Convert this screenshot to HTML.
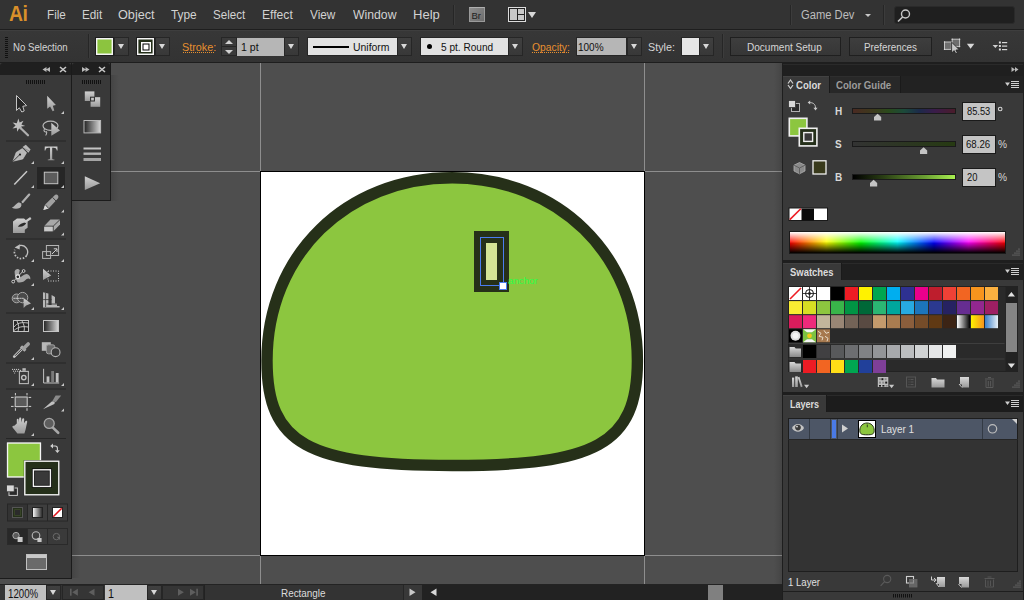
<!DOCTYPE html>
<html><head><meta charset="utf-8">
<style>
*{margin:0;padding:0;box-sizing:border-box}
html,body{width:1024px;height:600px;overflow:hidden;background:#323232}
body{position:relative;font-family:"Liberation Sans",sans-serif;color:#d6d6d6}
.a{position:absolute}
.t{position:absolute;white-space:nowrap;line-height:1}
.dd{position:absolute;background:linear-gradient(#404040,#383838);border:1px solid #262626}
.dd:after{content:"";position:absolute;left:50%;top:50%;margin-left:-3.75px;margin-top:-3px;border-left:3.75px solid transparent;border-right:3.75px solid transparent;border-top:5.4px solid #d8d8d8}
.sep{position:absolute;width:1px;background:#262626;box-shadow:1px 0 0 #3c3c3c}
</style></head><body>

<!-- MENU BAR -->
<div class="a" id="menubar" style="left:0;top:0;width:1024px;height:29px;background:#333"></div>
<div class="a" style="left:0;top:29px;width:1024px;height:1px;background:#1e1e1e"></div>
<div class="t" style="left:8.5px;top:2.5px;font-size:22px;font-weight:bold;color:#d9902a;letter-spacing:-0.5px;transform:scaleX(0.88);transform-origin:0 0">Ai</div>
<div class="t" style="left:46.66px;top:9px;font-size:12.5px;color:#d2d2d2;transform:scaleX(0.937);transform-origin:0 0">File</div>
<div class="t" style="left:81.56px;top:9px;font-size:12.5px;color:#d2d2d2;transform:scaleX(0.938);transform-origin:0 0">Edit</div>
<div class="t" style="left:117.89px;top:9px;font-size:12.5px;color:#d2d2d2;transform:scaleX(1.014);transform-origin:0 0">Object</div>
<div class="t" style="left:170.80px;top:9px;font-size:12.5px;color:#d2d2d2;transform:scaleX(0.948);transform-origin:0 0">Type</div>
<div class="t" style="left:212.97px;top:9px;font-size:12.5px;color:#d2d2d2;transform:scaleX(0.926);transform-origin:0 0">Select</div>
<div class="t" style="left:262.33px;top:9px;font-size:12.5px;color:#d2d2d2;transform:scaleX(0.971);transform-origin:0 0">Effect</div>
<div class="t" style="left:309.60px;top:9px;font-size:12.5px;color:#d2d2d2;transform:scaleX(0.941);transform-origin:0 0">View</div>
<div class="t" style="left:352.90px;top:9px;font-size:12.5px;color:#d2d2d2;transform:scaleX(0.978);transform-origin:0 0">Window</div>
<div class="t" style="left:412.96px;top:9px;font-size:12.5px;color:#d2d2d2;transform:scaleX(1.042);transform-origin:0 0">Help</div>
<div class="sep" style="left:453px;top:5px;height:20px"></div>


<div class="a" style="left:469px;top:7px;width:16px;height:15px;background:linear-gradient(135deg,#8e8e8e,#6c6c6c);border:1px solid #9a9a9a;border-top-color:#b0b0b0"></div>
<div class="t" style="left:471.5px;top:10.5px;font-size:9.5px;color:#1e1e1e">Br</div>
<div class="a" style="left:508px;top:7px;width:18px;height:15px;background:#c8c8c8;border:1px solid #dcdcdc;box-shadow:inset 0 0 0 1px #222"></div>
<div class="a" style="left:517px;top:9px;width:1px;height:11px;background:#222"></div>
<div class="a" style="left:518px;top:14px;width:6px;height:1px;background:#222"></div>
<div class="a" style="left:528px;top:12px;width:0;height:0;border-left:4px solid transparent;border-right:4px solid transparent;border-top:6px solid #d8d8d8"></div>
<div class="sep" style="left:790px;top:5px;height:20px"></div>
<div class="t" style="left:801.31px;top:8.5px;font-size:12.5px;color:#bdbdbd;transform:scaleX(0.895);transform-origin:0 0">Game Dev</div>
<div class="a" style="left:865px;top:14px;width:0;height:0;border-left:3px solid transparent;border-right:3px solid transparent;border-top:3px solid #c8c8c8"></div>
<div class="sep" style="left:883px;top:5px;height:20px"></div>
<div class="a" style="left:894px;top:6px;width:121px;height:18px;background:#1f1f1f;border-radius:3px;border:1px solid #2a2a2a"></div>
<svg class="a" style="left:896px;top:8px" width="16" height="16" viewBox="0 0 16 16"><circle cx="9.5" cy="6" r="4" fill="none" stroke="#c8c8c8" stroke-width="1.4"/><path d="M6.6 9 L2 13.5" stroke="#c8c8c8" stroke-width="1.6"/></svg>

<!-- CONTROL BAR -->
<div class="a" id="ctrl" style="left:0;top:30px;width:1024px;height:32px;background:linear-gradient(#3e3e3e 0,#3e3e3e 1px,#373737 1px,#333333)"></div>
<div class="a" style="left:0;top:62px;width:1024px;height:1px;background:#1e1e1e"></div>


<div class="a" style="left:5px;top:37px;width:3px;height:21px;background:repeating-linear-gradient(#111 0 1px,transparent 1px 2px)"></div>
<div class="t" style="left:12.88px;top:41.5px;font-size:10.5px;color:#d6d6d6;transform:scaleX(0.917);transform-origin:0 0">No Selection</div>
<div class="sep" style="left:88px;top:34px;height:24px"></div>
<div class="a" style="left:95px;top:37px;width:19px;height:19px;background:#8cc43f;border:1px solid #1e1e1e;box-shadow:inset 0 0 0 1.4px #f4f4f4"></div>
<div class="dd" style="left:114px;top:37px;width:15px;height:19px"></div>
<div class="a" style="left:136px;top:37px;width:19px;height:19px;background:#25301a;border:1px solid #1e1e1e;box-shadow:inset 0 0 0 1.4px #f4f4f4"></div>
<div class="a" style="left:140.5px;top:41.5px;width:10px;height:10px;background:#fff;box-shadow:inset 0 0 0 1.5px #fff,inset 0 0 0 2.5px #000"></div>
<div class="dd" style="left:155px;top:37px;width:15px;height:19px"></div>
<div class="t" style="left:181.77px;top:41.5px;font-size:10.5px;color:#e8902f;transform:scaleX(1.029);transform-origin:0 0">Stroke:</div>
<div class="a" style="left:183px;top:52px;width:32px;height:1px;background:repeating-linear-gradient(90deg,#e8902f 0 1px,transparent 1px 2px)"></div>
<div class="a" style="left:221px;top:37px;width:16px;height:10px;background:#3a3a3a;border:1px solid #262626"></div>
<div class="a" style="left:221px;top:46px;width:16px;height:10px;background:#3a3a3a;border:1px solid #262626"></div>
<div class="a" style="left:225px;top:40px;width:0;height:0;border-left:4px solid transparent;border-right:4px solid transparent;border-bottom:4px solid #d0d0d0"></div>
<div class="a" style="left:225px;top:50px;width:0;height:0;border-left:4px solid transparent;border-right:4px solid transparent;border-top:4px solid #d0d0d0"></div>
<div class="a" style="left:237px;top:38px;width:47px;height:18px;background:#b6b6b6"></div>
<div class="t" style="left:240.89px;top:41.5px;font-size:10.5px;color:#111;transform:scaleX(1.006);transform-origin:0 0">1 pt</div>
<div class="dd" style="left:284px;top:37px;width:15px;height:19px"></div>
<div class="a" style="left:307px;top:37px;width:91px;height:19px;background:#e2e2e2;border:1px solid #262626"></div>
<div class="a" style="left:313px;top:46px;width:36px;height:2px;background:#000"></div>
<div class="t" style="left:353.26px;top:41.5px;font-size:10.5px;color:#111;transform:scaleX(0.993);transform-origin:0 0">Uniform</div>
<div class="dd" style="left:397px;top:37px;width:15px;height:19px"></div>
<div class="a" style="left:420px;top:37px;width:89px;height:19px;background:#e2e2e2;border:1px solid #262626"></div>
<div class="a" style="left:427px;top:44px;width:5px;height:5px;border-radius:50%;background:#000"></div>
<div class="t" style="left:441.04px;top:41.5px;font-size:10.5px;color:#111;transform:scaleX(0.962);transform-origin:0 0">5 pt. Round</div>
<div class="dd" style="left:508px;top:37px;width:15px;height:19px"></div>
<div class="t" style="left:531.90px;top:41.5px;font-size:10.5px;color:#e8902f;transform:scaleX(0.982);transform-origin:0 0">Opacity:</div>
<div class="a" style="left:532px;top:52px;width:37px;height:1px;background:repeating-linear-gradient(90deg,#e8902f 0 1px,transparent 1px 2px)"></div>
<div class="a" style="left:576px;top:37px;width:51px;height:19px;background:#b6b6b6;border:1px solid #262626"></div>
<div class="t" style="left:578.05px;top:41.5px;font-size:10.5px;color:#111;transform:scaleX(0.952);transform-origin:0 0">100%</div>
<div class="dd" style="left:627px;top:37px;width:15px;height:19px"></div>
<div class="t" style="left:647.77px;top:41.5px;font-size:10.5px;color:#d6d6d6;transform:scaleX(1.025);transform-origin:0 0">Style:</div>
<div class="a" style="left:681px;top:37px;width:19px;height:19px;background:#e6e6e6;border:1px solid #262626"></div>
<div class="dd" style="left:699px;top:37px;width:15px;height:19px"></div>
<div class="sep" style="left:722px;top:34px;height:24px"></div>
<div class="a" style="left:730px;top:37px;width:111px;height:19px;background:linear-gradient(#3e3e3e,#363636);border:1px solid #1f1f1f"></div>
<div class="t" style="left:747.04px;top:41.5px;font-size:10.5px;color:#d6d6d6;transform:scaleX(0.956);transform-origin:0 0">Document Setup</div>
<div class="a" style="left:849px;top:37px;width:83px;height:19px;background:linear-gradient(#3e3e3e,#363636);border:1px solid #1f1f1f"></div>
<div class="t" style="left:863.86px;top:41.5px;font-size:10.5px;color:#d6d6d6;transform:scaleX(0.936);transform-origin:0 0">Preferences</div>


<svg class="a" style="left:936px;top:34px" width="80" height="26" viewBox="936 34 80 26">
<rect x="944.5" y="42" width="6.8" height="7.4" fill="#6e6e6e" stroke="#c4c4c4" stroke-width="1"/>
<rect x="952.2" y="39.2" width="7.4" height="7.4" fill="#6e6e6e" stroke="#c4c4c4" stroke-width="1"/>
<g fill="#d8d8d8"><circle cx="944.5" cy="42" r="0.7"/><circle cx="944.5" cy="49.4" r="0.7"/><circle cx="952.2" cy="39.2" r="0.7"/><circle cx="959.6" cy="39.2" r="0.7"/><circle cx="959.6" cy="46.6" r="0.7"/></g>
<path d="M951.6,42.2 L951.6,53 L954.2,50.6 L955.8,53.8 L957.4,53.1 L955.9,50 L959.3,49.8 Z" fill="#c8c8c8" stroke="#1e1e1e" stroke-width="0.8"/>
<path d="M966.9,43.8 L974.3,43.8 L970.6,48.8 Z" fill="#d8d8d8"/>
<path d="M992.6,45 L998.1,45 L995.35,48 Z" fill="#d0d0d0"/>
<g fill="#d8d8d8"><rect x="998.9" y="41.5" width="2" height="2"/><rect x="998.9" y="45" width="2" height="2"/><rect x="998.9" y="48.5" width="2" height="2"/><rect x="1002" y="42" width="5.2" height="1.2"/><rect x="1002" y="45.5" width="5.2" height="1.2"/><rect x="1002" y="49" width="5.2" height="1.2"/></g>
</svg>


<!-- CANVAS -->
<div class="a" id="canvas" style="left:0;top:63px;width:782px;height:521px;background:#4e4e4e"></div>


<div class="a" style="left:260px;top:171px;width:385px;height:385px;background:#fff;border:1px solid #000"></div>
<div class="a" style="left:260px;top:63px;width:1px;height:108px;background:#8e8e8e"></div>
<div class="a" style="left:644px;top:63px;width:1px;height:108px;background:#8e8e8e"></div>
<div class="a" style="left:260px;top:556px;width:1px;height:28px;background:#8e8e8e"></div>
<div class="a" style="left:644px;top:556px;width:1px;height:28px;background:#8e8e8e"></div>
<div class="a" style="left:72px;top:171px;width:188px;height:1px;background:#8e8e8e"></div>
<div class="a" style="left:645px;top:171px;width:137px;height:1px;background:#8e8e8e"></div>
<div class="a" style="left:72px;top:555px;width:188px;height:1px;background:#8e8e8e"></div>
<div class="a" style="left:645px;top:555px;width:137px;height:1px;background:#8e8e8e"></div>
<svg class="a" style="left:0;top:0" width="1024" height="600" viewBox="0 0 1024 600">
<path d="M452.2,177.8 C347.3,177.8 267,254.1 267,360.7 C267,444.4 308.5,465.5 452.2,465.5 C595.9,465.5 637.4,444.4 637.4,360.7 C637.4,254.1 557.1,177.8 452.2,177.8 Z" fill="#8cc63f" stroke="#263019" stroke-width="11.4"/>
<rect x="474" y="231" width="35" height="61" fill="#263019"/>
<rect x="486" y="243" width="11" height="37" fill="#d5e496"/>
<rect x="480.5" y="237.5" width="23" height="48" fill="none" stroke="#4a7cf0" stroke-width="1"/>
<rect x="499.5" y="282.5" width="7" height="7" fill="#fff" stroke="#4a7cf0" stroke-width="1"/>
</svg>
<div class="t" style="left:507.90px;top:276px;font-size:9.5px;color:#2cff46;transform:scaleX(1.021);transform-origin:0 0">anchor</div>

<div class="a" style="left:72px;top:201px;width:8px;height:377px;background:linear-gradient(90deg,rgba(0,0,0,.12),rgba(0,0,0,0))"></div>
<div class="a" style="left:111px;top:75px;width:8px;height:126px;background:linear-gradient(90deg,rgba(0,0,0,.12),rgba(0,0,0,0))"></div>
<div class="a" style="left:774px;top:63px;width:8px;height:521px;background:linear-gradient(90deg,rgba(0,0,0,0),rgba(0,0,0,.12))"></div>
<!-- TOOLBAR -->
<div class="a" id="toolbar" style="left:0;top:63px;width:72px;height:516px;background:#393939;border-right:1px solid #1b1b1b;border-bottom:1px solid #1b1b1b"></div>
<div class="a" style="left:0;top:63px;width:71px;height:12px;background:#1f1f1f;border-radius:3px 3px 0 0"></div>

<!-- MINI PANEL -->
<div class="a" id="mini" style="left:72px;top:63px;width:39px;height:138px;background:#393939;border-right:1px solid #1b1b1b;border-bottom:1px solid #1b1b1b"></div>
<div class="a" style="left:72px;top:63px;width:38px;height:12px;background:#1f1f1f;border-radius:3px 3px 0 0"></div>

<svg class="a" style="left:0;top:0" width="112" height="600" viewBox="0 0 112 600">
<defs>
<linearGradient id="ig" x1="0" y1="0" x2="0" y2="1"><stop offset="0" stop-color="#d0d0d0"/><stop offset="1" stop-color="#9a9a9a"/></linearGradient>
<linearGradient id="gg" x1="0" y1="0" x2="1" y2="0"><stop offset="0" stop-color="#222"/><stop offset="1" stop-color="#d8d8d8"/></linearGradient>
</defs>
<!-- header icons -->
<path d="M42.5,69.5 L46.5,67 L46.5,72 Z M46,69.5 L50,67 L50,72 Z" fill="#b8b8b8"/>
<path d="M60,67 L66,72 M66,67 L60,72" stroke="#c8c8c8" stroke-width="1.6"/>

<path d="M26.5,80v4M28.5,80v4M30.5,80v4M32.5,80v4M34.5,80v4M36.5,80v4M38.5,80v4M40.5,80v4M42.5,80v4M44.5,80v4" stroke="#111" stroke-width="1"/>
<!-- mini panel header -->
<path d="M82,67 L86,69.5 L82,72 Z M85.5,67 L89.5,69.5 L85.5,72 Z" fill="#b8b8b8"/>
<path d="M99,67 L105,72 M105,67 L99,72" stroke="#c8c8c8" stroke-width="1.6"/>
<path d="M82.5,80v4M84.5,80v4M86.5,80v4M88.5,80v4M90.5,80v4M92.5,80v4M94.5,80v4M96.5,80v4M98.5,80v4M100.5,80v4" stroke="#111" stroke-width="1"/>
<!-- separators -->
<g fill="#262626"><rect x="6" y="140.5" width="60" height="1"/><rect x="6" y="238.5" width="60" height="1"/><rect x="6" y="312.5" width="60" height="1"/><rect x="6" y="362.5" width="60" height="1"/><rect x="6" y="388.5" width="60" height="1"/><rect x="6" y="438" width="60" height="1"/></g>
<!-- corner triangles -->
<g fill="#c8c8c8">
<path d="M61,114 H64 V111 Z"/>
<path d="M31,164 H34 V161 Z M61,164 H64 V161 Z"/>
<path d="M31,188 H34 V185 Z M61,188 H64 V185 Z"/>
<path d="M61,212.5 H64 V209.5 Z M61,235.5 H64 V232.5 Z"/>
<path d="M31,262 H34 V259 Z M61,262 H64 V259 Z"/>
<path d="M31,286 H34 V283 Z"/>
<path d="M31,310 H34 V307 Z M61,310 H64 V307 Z"/>
<path d="M31,360 H34 V357 Z"/>
<path d="M31,386 H34 V383 Z M61,386 H64 V383 Z"/>
<path d="M61,411.5 H64 V408.5 Z M31,436 H34 V433 Z"/>
</g>
<!-- row1 selection -->
<path d="M16.5,95.5 L16.5,110.5 L19.3,107.8 L21.8,112 L24.2,111 L22.8,106.3 L26.6,105.6 Z" fill="#262626" stroke="#c4c4c4" stroke-width="1"/>
<path d="M47.2,95.8 L47.2,108.8 L50.1,106.5 L52.6,111.2 L54.3,110.6 L52.8,105.8 L55.9,105 Z" fill="url(#ig)"/>
<!-- row2 magic wand -->
<path d="M18.4,118.5 L19.6,122.4 L23.5,120.8 L21.4,124.4 L25.2,126 L21.2,126.6 L22.4,130.6 L19.2,128.2 L17.2,131.8 L16.8,127.8 L12.5,128.6 L15.6,125.6 L12.6,122.6 L16.8,123.2 Z" fill="#c0c0c0"/>
<path d="M20.5,128 L28,135.3" stroke="#b0b0b0" stroke-width="2.2" stroke-linecap="round"/>
<!-- lasso -->
<ellipse cx="50.5" cy="125.8" rx="7.5" ry="4.6" fill="none" stroke="#b8b8b8" stroke-width="1.2"/>
<path d="M44.5,129 C43,131 45,132.5 46.5,131.8 C47.5,133.5 45.5,134.5 46,135.5" fill="none" stroke="#b8b8b8" stroke-width="1.1"/>
<path d="M51.3,122.8 L51.3,135.8 L60,130.6 Z" fill="url(#ig)"/>
<!-- row3 pen -->
<path d="M13,161.2 L16.2,152.4 L22.4,148.6 L26.6,152.8 L22.8,159 Z" fill="#b8b8b8" stroke="#d0d0d0" stroke-width="0.6"/>
<path d="M13,161.2 L19.6,154.8" stroke="#333" stroke-width="0.9"/>
<circle cx="20" cy="154.6" r="1.1" fill="#222"/>
<path d="M22.6,147 L25.8,144.8 L30.6,149.6 L28.4,152.8 Z" fill="#b8b8b8"/>
<path d="M23.8,148.4 L29.2,150.8" stroke="#777" stroke-width="0.6"/>
<!-- T -->
<path d="M44.8,146.6 H57.4 L57.6,150.6 H56.8 C56.4,148.4 55.6,147.8 53.6,147.8 H52.2 V158.2 C52.2,159.2 52.8,159.6 54.4,159.6 V160.3 H47.8 V159.6 C49.4,159.6 50,159.2 50,158.2 V147.8 H48.6 C46.6,147.8 45.8,148.4 45.4,150.6 H44.6 Z" fill="url(#ig)"/>
<!-- row4 line -->
<path d="M14.3,184.6 L27,171.3" stroke="#c8c8c8" stroke-width="1.5"/>
<!-- rect selected -->
<rect x="37" y="167" width="28" height="22" fill="#262626"/>
<rect x="44.3" y="172.2" width="13.5" height="11.5" fill="#5c5c5c" stroke="#c4c4c4" stroke-width="1"/>
<path d="M61,188 H64 V185 Z" fill="#c8c8c8"/>
<!-- row5 brush -->
<path d="M29.2,194.6 L22.2,202.4" stroke="#b0b0b0" stroke-width="2.2" stroke-linecap="round"/>
<path d="M20.4,201.6 L22.8,203.8" stroke="#2a2a2a" stroke-width="0.8"/>
<path d="M11.8,207.8 C13.6,207.2 15.4,204.6 17.6,203 C19.4,201.8 21.8,203.2 21.4,205.4 C20.8,208.4 16.2,209.8 11.8,207.8 Z" fill="#b4b4b4"/>
<!-- pencil -->
<path d="M43.4,210 L45.2,204.6 L54.4,195.4 C55.6,194.2 57.4,194.4 58,195.6 C58.8,196.8 58.4,198.2 57.4,199 L48.6,208.4 Z" fill="#a0a0a0"/>
<path d="M43.4,210 L45.2,204.6 L48.6,208.4 Z" fill="#d8d8d8"/>
<path d="M45.2,204.6 L48.6,208.4 M52.6,197.4 L56,201" stroke="#2a2a2a" stroke-width="0.8"/>
<!-- row6 blob brush -->
<path d="M13,221.5 L17,218.6 L24,218.6 L27.6,221.6 L27.6,227.8 L24.8,229.8 L24.8,233 L13,233 Z" fill="url(#ig)"/>
<path d="M17.8,226.6 C20,223.8 23.8,222.4 26.4,222.6 C25.4,225.4 22,227.6 17.8,226.6 Z" fill="#2a2a2a"/>
<path d="M24.8,222.2 L30.8,218" stroke="#c8c8c8" stroke-width="2.2"/>
<!-- eraser -->
<path d="M44,226.2 L50.4,219.6 L60,219.6 L60,224.6 L53.2,231.6 L44,231.6 Z" fill="#a8a8a8"/>
<path d="M44,226.2 L53.2,226.2 L60,219.6 M53.2,226.2 L53.2,231.6" stroke="#262626" stroke-width="0.8" fill="none"/>
<path d="M44.6,226.8 L52.6,226.8 L52.6,231 L44.6,231 Z" fill="#c8c8c8"/>
<!-- row7 rotate -->
<path d="M19.85,245.50 A6.6,6.6 0 0 1 26.41,255.79" fill="none" stroke="#c0c0c0" stroke-width="1.3"/>
<path d="M26.41,255.79 A6.6,6.6 0 0 1 14.80,249.74" fill="none" stroke="#c0c0c0" stroke-width="1.7" stroke-dasharray="1.5 1.5"/>
<path d="M14.6,247.6 L20,244.2 L19.6,249.6 Z" fill="#c0c0c0"/>
<!-- scale -->
<rect x="46.4" y="245.5" width="12.2" height="10" fill="#3e3e3e" stroke="#b4b4b4" stroke-width="1"/>
<rect x="42.6" y="251.6" width="8" height="6.8" fill="none" stroke="#b4b4b4" stroke-width="1"/>
<path d="M52,254 L56.8,249.2 M53.8,248.8 L57,248.8 L57,252" stroke="#d0d0d0" stroke-width="1" fill="none"/>
<!-- row8 width/warp -->
<path d="M14.6,271.4 C16,268.4 18.8,268.6 19.8,270.6 C19.2,272.6 18.4,275 19.6,277.4 C22,277 25.6,272.4 28.4,274.8 C30.4,276.6 30.6,278.4 30.2,279.4 C28.6,277.8 26.8,278.4 25,280.6 C22.8,282.6 19.4,283 17.6,282.2 C15.6,279.6 14.6,275 14.6,271.4 Z" fill="#a8a8a8"/>
<path d="M13,281.8 L23.6,270.6" stroke="#d8d8d8" stroke-width="0.9"/>
<circle cx="17.8" cy="276.8" r="1.9" fill="#2a2a2a" stroke="#e8e8e8" stroke-width="1.1"/>
<circle cx="13.2" cy="281.6" r="1.4" fill="#2a2a2a" stroke="#e0e0e0" stroke-width="0.9"/>
<circle cx="23.6" cy="271" r="1.4" fill="#2a2a2a" stroke="#e0e0e0" stroke-width="0.9"/>
<!-- free transform -->
<path d="M43,268.8 L43,280 L51.2,275.6 Z" fill="url(#ig)"/>
<rect x="48" y="271" width="10.5" height="10" fill="none" stroke="#d0d0d0" stroke-width="1" stroke-dasharray="1 1.5"/>
<!-- row9 shape builder -->
<circle cx="16.6" cy="298.4" r="4.4" fill="#5a5a5a" stroke="#a8a8a8" stroke-width="1"/>
<circle cx="22.6" cy="297.6" r="5.2" fill="#4a4a4a" stroke="#a8a8a8" stroke-width="1"/>
<path d="M13.6,298.4 H24" stroke="#f0f0f0" stroke-width="1.2" stroke-dasharray="1 1"/>
<path d="M23.6,298 L23.6,308 L26.2,305.4 L31,303.6 Z" fill="url(#ig)"/>
<!-- perspective grid -->
<path d="M43,292.2 L43,307.6 L59.6,307.6 L59.6,306 L57,306 L57,303.4 L55,303.4 L55,297 L51.6,295 L51.6,305 L48.4,305 L48.4,293.6 Z" fill="#b8b8b8"/>
<path d="M43.2,299.6 H51.6 M45.6,292.8 V307 M46.6,304 H57" stroke="#333" stroke-width="0.8"/>
<!-- row10 mesh -->
<rect x="13.5" y="320.5" width="15" height="11" fill="#262626" stroke="#c4c4c4" stroke-width="1"/>
<path d="M14,327 C17,323 21,322 28,323 M14,330.5 C18,327 22,326 28,327 M17,321 C19,325 19,328 18,331.5 M22,321 C24,324 25,328 24,331.5" fill="none" stroke="#d0d0d0" stroke-width="0.9"/>
<!-- gradient -->
<rect x="43.5" y="320.5" width="15" height="11" fill="url(#gg)" stroke="#c4c4c4" stroke-width="1"/>
<!-- row11 eyedropper -->
<path d="M14.2,356.6 L22.6,348.2" stroke="#c8c8c8" stroke-width="2.6" stroke-linecap="round"/>
<path d="M15,355.8 L22,348.8" stroke="#333" stroke-width="1"/>
<path d="M21,346.4 L25.4,350.8" stroke="#b0b0b0" stroke-width="3"/>
<path d="M23.6,348.6 L28.2,344" stroke="#a0a0a0" stroke-width="3.6" stroke-linecap="round"/>
<!-- blend -->
<rect x="41.8" y="342.2" width="9" height="8.6" fill="#b8b8b8"/>
<rect x="46.4" y="344.8" width="8.4" height="9" rx="2" fill="#6a6a6a" stroke="#a0a0a0" stroke-width="1"/>
<circle cx="55.6" cy="352.2" r="4.4" fill="#3a3a3a" stroke="#b4b4b4" stroke-width="1.1"/>
<!-- row12 symbol sprayer -->
<g fill="#c8c8c8"><circle cx="12.6" cy="369.4" r="0.6"/><circle cx="14.6" cy="369.4" r="0.6"/><circle cx="16.6" cy="369.4" r="0.6"/><circle cx="18.6" cy="369.4" r="0.6"/><circle cx="13.6" cy="371.2" r="0.6"/><circle cx="15.6" cy="371.2" r="0.6"/><circle cx="17.6" cy="371.2" r="0.6"/><circle cx="20.4" cy="370.4" r="0.6"/><circle cx="14.6" cy="373" r="0.6"/></g>
<rect x="22.4" y="368.2" width="3.4" height="2.6" fill="#b8b8b8"/>
<rect x="19.4" y="371.4" width="9" height="12.2" fill="#3a3a3a" stroke="#b8b8b8" stroke-width="1.1"/>
<circle cx="23.8" cy="377.6" r="2.2" fill="none" stroke="#c0c0c0" stroke-width="1.4"/>
<!-- column graph -->
<path d="M43.6,368.8 V383 H59.2" fill="none" stroke="#c0c0c0" stroke-width="1"/>
<rect x="46.6" y="376.4" width="2.8" height="6" fill="#c0c0c0"/>
<rect x="51.2" y="371" width="2.8" height="11.4" fill="#7a7a7a"/>
<rect x="55.8" y="373" width="2.8" height="9.4" fill="#c0c0c0"/>
<!-- row13 artboard -->
<rect x="15.2" y="397" width="12" height="9.6" fill="#5a5a5a" stroke="#c8c8c8" stroke-width="1.1"/>
<path d="M15.4,393 V395.4 M27,393 V395.4 M15.4,408.2 V410.8 M27,408.2 V410.8 M11,397.4 H13.6 M28.6,397.4 H31.2 M11,406.4 H13.6 M28.6,406.4 H31.2" stroke="#d0d0d0" stroke-width="1"/>
<!-- slice -->
<path d="M43,409.2 L50.6,402.4 C52,401 54,401 54.8,402.2 L54.4,404 Z" fill="#c0c0c0"/>
<path d="M52.4,401 L55.6,395.6 L61.2,395.6 L55.8,402.2 Z" fill="#8a8a8a"/>
<!-- row14 hand -->
<path d="M16.8,423.6 L16.8,419.6 C16.8,418.4 18.6,418.4 18.6,419.6 L18.6,422.6 L19.2,418.4 C19.2,417.2 21.2,417.2 21.2,418.4 L21.4,422.4 L22.2,419 C22.4,417.8 24.2,418 24.2,419.2 L24,423.2 L25.2,421.4 C25.8,420.4 27.4,420.8 27.2,422 L25.6,429.6 L24.4,433.6 L17.4,433.6 L12.6,427.4 C12,426.4 13,425.4 14,426 Z" fill="url(#ig)"/>
<!-- zoom -->
<path d="M52.6,427.4 L58.2,432.8" stroke="#a8a8a8" stroke-width="2.6" stroke-linecap="round"/>
<circle cx="49.2" cy="423.4" r="5" fill="#5e5e5e" stroke="#a8a8a8" stroke-width="1.3"/>
<!-- fill / stroke -->
<rect x="6.5" y="442" width="35" height="36" fill="#1e1e1e"/>
<rect x="7.5" y="443" width="33" height="34" fill="#8cc63f" stroke="#f4f4f4" stroke-width="1.4"/>
<rect x="23.8" y="460.2" width="36" height="35.6" fill="#1e1e1e"/>
<rect x="24.8" y="461.2" width="34" height="33.6" fill="#25301a" stroke="#f4f4f4" stroke-width="1.4"/>
<rect x="33.4" y="469.8" width="17" height="16.6" fill="#393939" stroke="#0e0e0e" stroke-width="3"/>
<rect x="33.4" y="469.8" width="17" height="16.6" fill="none" stroke="#f4f4f4" stroke-width="1.4"/>
<path d="M52,446 H55.2 C56.6,446 57.4,446.8 57.4,448.2 V450.6" fill="none" stroke="#d0d0d0" stroke-width="1.1"/>
<path d="M50.2,446 L53,443.6 L53,448.4 Z M57.4,453 L55,450.2 L59.8,450.2 Z" fill="#d0d0d0"/>
<rect x="9" y="488" width="8.4" height="7.4" fill="#2a2a2a" stroke="#c8c8c8" stroke-width="1"/>
<rect x="6.6" y="485" width="7.6" height="6.8" fill="#d8d8d8" stroke="#333" stroke-width="0.8"/>
<!-- mode buttons -->
<rect x="7" y="503.5" width="61" height="18" fill="#262626"/>
<rect x="8" y="504.5" width="19" height="16" fill="#333"/>
<rect x="28" y="504.5" width="19" height="16" fill="#3e3e3e"/>
<rect x="48" y="504.5" width="19" height="16" fill="#3e3e3e"/>
<rect x="12.5" y="507.5" width="10" height="10" fill="#25301a" stroke="#555" stroke-width="1"/>
<rect x="14.6" y="509.6" width="5.8" height="5.8" fill="#2b2b2b" stroke="#3c4a2a" stroke-width="0.8"/>
<linearGradient id="g2" x1="0" y1="0" x2="1" y2="0"><stop offset="0" stop-color="#fff"/><stop offset="1" stop-color="#222"/></linearGradient>
<rect x="32.5" y="507.5" width="10" height="10" fill="url(#g2)" stroke="#222" stroke-width="1"/>
<rect x="52.5" y="507.5" width="10" height="10" fill="#fff" stroke="#222" stroke-width="1"/>
<path d="M53.2,516.8 L61.8,508.2" stroke="#e0161e" stroke-width="1.6"/>
<!-- draw modes -->
<rect x="7" y="528" width="61" height="17" fill="#2a2a2a"/>
<rect x="8" y="529" width="19" height="15" fill="#282828"/>
<rect x="28" y="529" width="19" height="15" fill="#3c3c3c"/>
<rect x="48" y="529" width="19" height="15" fill="#3a3a3a"/>
<circle cx="16" cy="535.6" r="3.2" fill="#5a5a5a" stroke="#a8a8a8" stroke-width="1"/>
<rect x="17.6" y="537" width="5" height="5" fill="#c8c8c8"/>
<circle cx="36" cy="535.6" r="3.8" fill="none" stroke="#b8b8b8" stroke-width="1.1"/>
<rect x="37.4" y="538" width="4.2" height="4" fill="#c8c8c8"/>
<circle cx="56.4" cy="536.6" r="3.2" fill="none" stroke="#6a6a6a" stroke-width="1"/>
<path d="M56.6,536.8 L60,536.8 L60,540 Z" fill="#6a6a6a"/>
<!-- screen mode -->
<rect x="26.5" y="554.5" width="20" height="15" fill="#6a6a6a" stroke="#c0c0c0" stroke-width="1"/>
<rect x="27" y="555" width="19" height="3" fill="#c8c8c8"/>
<!-- mini panel icons -->
<rect x="84.8" y="91.4" width="9.6" height="9.6" fill="url(#ig)"/>
<rect x="90.6" y="97.2" width="9.6" height="9.6" fill="url(#ig)"/>
<rect x="90.6" y="97.2" width="3.8" height="3.8" fill="none" stroke="#262626" stroke-width="1"/>
<rect x="84" y="120.5" width="16.6" height="12.4" fill="url(#gg)" stroke="#b8b8b8" stroke-width="1"/>
<rect x="83.5" y="147.5" width="17.5" height="2" fill="#c4c4c4"/>
<rect x="83.5" y="152.5" width="17.5" height="2.4" fill="#b4b4b4"/>
<rect x="83.5" y="158" width="17.5" height="3" fill="#a4a4a4"/>
<path d="M84.8,176.3 L84.8,190 L100.2,183.2 Z" fill="url(#ig)"/>
</svg>

<!-- STATUS BAR -->
<div class="a" style="left:0;top:584px;width:782px;height:16px;background:#333;border-top:1px solid #232323"></div>
<div class="a" style="left:5px;top:585px;width:41px;height:15px;background:#c0c0c0"></div>
<div class="t" style="left:7.79px;top:588px;font-size:12px;color:#111;transform:scaleX(0.806);transform-origin:0 0">1200%</div>
<div class="dd" style="left:46px;top:585px;width:15px;height:15px"></div>
<div class="a" style="left:62px;top:585px;width:42px;height:15px;background:#353535;border:1px solid #262626"></div>
<div class="a" style="left:105px;top:585px;width:42px;height:15px;background:#c0c0c0"></div>
<div class="t" style="left:108px;top:588px;font-size:12px;color:#111;transform:scaleX(0.9);transform-origin:0 0">1</div>
<div class="dd" style="left:147px;top:585px;width:15px;height:15px"></div>
<div class="a" style="left:162px;top:585px;width:42px;height:15px;background:#353535;border:1px solid #262626"></div>
<div class="a" style="left:204px;top:585px;width:1px;height:15px;background:#222"></div>
<div class="t" style="left:281.00px;top:588px;font-size:11px;color:#dcdcdc;transform:scaleX(0.900);transform-origin:0 0">Rectangle</div>
<div class="a" style="left:403px;top:585px;width:19px;height:15px;background:#383838;border-left:1px solid #262626"></div>
<div class="a" style="left:422px;top:585px;width:360px;height:15px;background:#222"></div>
<div class="a" style="left:708px;top:585px;width:15px;height:15px;background:#808080"></div>
<svg class="a" style="left:0;top:580px" width="440" height="20" viewBox="0 580 440 20">
<g fill="#5e5e5e">
<rect x="70" y="588.7" width="1.6" height="7"/><path d="M72.2,592.2 L77.9,588.7 L77.9,595.7 Z"/>
<path d="M88.6,592.2 L94.5,588.7 L94.5,595.7 Z"/>
<path d="M178,588.7 L183.9,592.2 L178,595.7 Z"/>
<path d="M190,588.7 L195.7,592.2 L190,595.7 Z"/><rect x="196.3" y="588.7" width="1.6" height="7"/>
</g>
<path d="M409.5,588.5 L415.5,592.2 L409.5,596 Z" fill="#c8c8c8"/>
<path d="M436.5,588.5 L430.5,592.2 L436.5,596 Z" fill="#d8d8d8"/>
</svg>


<!-- RIGHT DOCK -->
<!-- dock base -->
<div class="a" style="left:782px;top:63px;width:242px;height:537px;background:#1e1e1e"></div>
<div class="a" style="left:783px;top:64px;width:240px;height:12px;background:#1f1f1f;border-top:1px solid #2a2a2a"></div>
<!-- COLOR PANEL -->
<div class="a" style="left:783px;top:76px;width:240px;height:17px;background:#222"></div>
<div class="a" style="left:783px;top:76px;width:46px;height:184px;background:#393939;border-top:1px solid #424242"></div>
<div class="a" style="left:829px;top:76px;width:1px;height:17px;background:#1a1a1a"></div>
<div class="a" style="left:830px;top:76px;width:70px;height:17px;background:#282828;border-top:1px solid #2e2e2e"></div>
<div class="a" style="left:900px;top:76px;width:1px;height:17px;background:#1a1a1a"></div>
<div class="a" style="left:783px;top:93px;width:240px;height:167px;background:#393939"></div>
<div class="t" style="left:796.30px;top:80px;font-size:11px;font-weight:bold;color:#dcdcdc;transform:scaleX(0.869);transform-origin:0 0">Color</div>
<div class="t" style="left:836.30px;top:80px;font-size:11px;font-weight:bold;color:#9c9c9c;transform:scaleX(0.876);transform-origin:0 0">Color Guide</div>
<!-- H S B -->
<div class="t" style="left:835px;top:107px;font-size:10px;font-weight:bold;color:#d8d8d8">H</div>
<div class="t" style="left:835px;top:140px;font-size:10px;font-weight:bold;color:#d8d8d8">S</div>
<div class="t" style="left:835px;top:173px;font-size:10px;font-weight:bold;color:#d8d8d8">B</div>
<div class="a" style="left:852px;top:108px;width:104px;height:6px;border:1px solid #1a1a1a;background:linear-gradient(90deg,#4a2a22,#3c3a1c 20%,#2a4a1c 35%,#1c4a3a 50%,#1c2a4a 65%,#3a1c4a 80%,#4a1c2a)"></div>
<div class="a" style="left:852px;top:141px;width:104px;height:6px;border:1px solid #1a1a1a;background:linear-gradient(90deg,#333,#263a12)"></div>
<div class="a" style="left:852px;top:174px;width:104px;height:6px;border:1px solid #1a1a1a;background:linear-gradient(90deg,#000,#2a3e14 30%,#6a9e32 70%,#a8f050)"></div>
<div class="a" style="left:962px;top:102px;width:34px;height:19px;background:#c4c4c4;border:1px solid #1a1a1a"></div>
<div class="a" style="left:962px;top:135px;width:34px;height:19px;background:#c4c4c4;border:1px solid #1a1a1a"></div>
<div class="a" style="left:962px;top:168px;width:34px;height:19px;background:#c4c4c4;border:1px solid #1a1a1a"></div>
<div class="t" style="left:967.00px;top:106px;font-size:11px;color:#111;transform:scaleX(0.844);transform-origin:0 0">85.53</div>
<div class="t" style="left:966.12px;top:139px;font-size:11px;color:#111;transform:scaleX(0.877);transform-origin:0 0">68.26</div>
<div class="t" style="left:967.00px;top:172px;font-size:11px;color:#111;transform:scaleX(0.850);transform-origin:0 0">20</div>
<div class="t" style="left:998.40px;top:139px;font-size:11px;color:#d8d8d8;transform:scaleX(0.920);transform-origin:0 0">%</div>
<div class="t" style="left:998.40px;top:172px;font-size:11px;color:#d8d8d8;transform:scaleX(0.920);transform-origin:0 0">%</div>
<!-- spectrum -->
<div class="a" style="left:789px;top:231px;width:217px;height:23px;border:1px solid #1a1a1a;background:linear-gradient(#fff0,#fff0 45%,#000),linear-gradient(#fff,#fff0 55%),linear-gradient(90deg,#f00,#ff0 17%,#0f0 33%,#0ff 50%,#00f 67%,#f0f 83%,#f00)"></div>
<!-- SWATCHES PANEL -->
<div class="a" style="left:783px;top:263px;width:240px;height:17px;background:#1f1f1f;border-top:1px solid #2a2a2a"></div>
<div class="a" style="left:783px;top:263px;width:58px;height:17px;background:#393939;border-top:1px solid #424242"></div>
<div class="a" style="left:841px;top:263px;width:1px;height:17px;background:#1a1a1a"></div>
<div class="a" style="left:783px;top:280px;width:240px;height:112px;background:#393939"></div>
<div class="t" style="left:789.75px;top:267px;font-size:11px;font-weight:bold;color:#dcdcdc;transform:scaleX(0.858);transform-origin:0 0">Swatches</div>
<div class="a" style="left:788px;top:286px;width:230px;height:86px;background:#2a2a2a;border:1px solid #222"></div>
<svg class="a" style="left:0;top:0" width="1024" height="600" viewBox="0 0 1024 600">
<defs><linearGradient id="sg1"><stop offset="0" stop-color="#fff"/><stop offset="1" stop-color="#000"/></linearGradient><linearGradient id="sg2"><stop offset="0" stop-color="#fff200"/><stop offset="1" stop-color="#f7941d"/></linearGradient><linearGradient id="sg3"><stop offset="0" stop-color="#3a7fc8"/><stop offset="1" stop-color="#e8f0f8"/></linearGradient><linearGradient id="fg" x1="0" y1="0" x2="0" y2="1"><stop offset="0" stop-color="#d8d8d8"/><stop offset="1" stop-color="#8a8a8a"/></linearGradient></defs>
<rect x="789.0" y="287.0" width="13" height="13" fill="#fff"/><path d="M790.0,299.0 L801.0,288.0" stroke="#ed1c24" stroke-width="1.6"/>
<rect x="803.0" y="287.0" width="13" height="13" fill="#fff"/><circle cx="809.5" cy="293.5" r="4" fill="none" stroke="#111" stroke-width="1"/><circle cx="809.5" cy="293.5" r="1.2" fill="none" stroke="#111" stroke-width="0.8"/><path d="M809.5,287.0 V300.0 M803.0,293.5 H816.0" stroke="#111" stroke-width="0.8"/>
<rect x="817.0" y="287.0" width="13" height="13" fill="#ffffff"/>
<rect x="831.0" y="287.0" width="13" height="13" fill="#000000"/>
<rect x="845.0" y="287.0" width="13" height="13" fill="#ed1c24"/>
<rect x="859.0" y="287.0" width="13" height="13" fill="#fff200"/>
<rect x="873.0" y="287.0" width="13" height="13" fill="#00a651"/>
<rect x="887.0" y="287.0" width="13" height="13" fill="#00aeef"/>
<rect x="901.0" y="287.0" width="13" height="13" fill="#2e3192"/>
<rect x="915.0" y="287.0" width="13" height="13" fill="#ec008c"/>
<rect x="929.0" y="287.0" width="13" height="13" fill="#be1e2d"/>
<rect x="943.0" y="287.0" width="13" height="13" fill="#ef4136"/>
<rect x="957.0" y="287.0" width="13" height="13" fill="#f26522"/>
<rect x="971.0" y="287.0" width="13" height="13" fill="#f7941d"/>
<rect x="985.0" y="287.0" width="13" height="13" fill="#fbb040"/>
<rect x="789.0" y="301.1" width="13" height="13" fill="#f9ed32"/>
<rect x="803.0" y="301.1" width="13" height="13" fill="#d7df23"/>
<rect x="817.0" y="301.1" width="13" height="13" fill="#8dc63f"/>
<rect x="831.0" y="301.1" width="13" height="13" fill="#39b54a"/>
<rect x="845.0" y="301.1" width="13" height="13" fill="#009444"/>
<rect x="859.0" y="301.1" width="13" height="13" fill="#006838"/>
<rect x="873.0" y="301.1" width="13" height="13" fill="#2bb673"/>
<rect x="887.0" y="301.1" width="13" height="13" fill="#00a79d"/>
<rect x="901.0" y="301.1" width="13" height="13" fill="#27aae1"/>
<rect x="915.0" y="301.1" width="13" height="13" fill="#1c75bc"/>
<rect x="929.0" y="301.1" width="13" height="13" fill="#2b3990"/>
<rect x="943.0" y="301.1" width="13" height="13" fill="#262262"/>
<rect x="957.0" y="301.1" width="13" height="13" fill="#662d91"/>
<rect x="971.0" y="301.1" width="13" height="13" fill="#92278f"/>
<rect x="985.0" y="301.1" width="13" height="13" fill="#9e1f63"/>
<rect x="789.0" y="315.2" width="13" height="13" fill="#da1c5c"/>
<rect x="803.0" y="315.2" width="13" height="13" fill="#ee2a7b"/>
<rect x="817.0" y="315.2" width="13" height="13" fill="#c2b59b"/>
<rect x="831.0" y="315.2" width="13" height="13" fill="#998675"/>
<rect x="845.0" y="315.2" width="13" height="13" fill="#736357"/>
<rect x="859.0" y="315.2" width="13" height="13" fill="#594a42"/>
<rect x="873.0" y="315.2" width="13" height="13" fill="#c49a6c"/>
<rect x="887.0" y="315.2" width="13" height="13" fill="#a97c50"/>
<rect x="901.0" y="315.2" width="13" height="13" fill="#8b5e3c"/>
<rect x="915.0" y="315.2" width="13" height="13" fill="#754c29"/>
<rect x="929.0" y="315.2" width="13" height="13" fill="#603913"/>
<rect x="943.0" y="315.2" width="13" height="13" fill="#3c2415"/>
<rect x="957.0" y="315.2" width="13" height="13" fill="url(#sg1)"/>
<rect x="971.0" y="315.2" width="13" height="13" fill="url(#sg2)"/>
<rect x="985.0" y="315.2" width="13" height="13" fill="url(#sg3)"/>
<rect x="789.0" y="329.3" width="13" height="13" fill="#000"/><circle cx="795.5" cy="335.8" r="5" fill="#ddd"/><circle cx="795.5" cy="335.8" r="3" fill="#f4f4f4"/>
<rect x="803.0" y="329.3" width="13" height="13" fill="#7cc242"/><path d="M803.0,329.3 H816.0 L812.0,332.3 H807.0 Z M803.0,342.3 H816.0 L812.0,339.3 H807.0 Z" fill="#f4f4f4"/><circle cx="809.5" cy="335.8" r="2.4" fill="#f2c81a"/>
<rect x="817.0" y="329.3" width="13" height="13" fill="#a6784e"/><path d="M818.0,331.3 l3,2 l-2,3 l4,1 l-1,3 M824.0,330.3 l2,3 l3,-1 M825.0,336.3 l3,2 l-1,3" stroke="#e8dcc8" stroke-width="1" fill="none"/>
<rect x="788.5" y="343" width="216" height="1" fill="#3e3e3e"/>
<rect x="788.5" y="358.5" width="216" height="1" fill="#3e3e3e"/>
<path d="M789.5,347.0 h5 l1.2,1.6 h5.3 v8.4 h-11.5 Z" fill="url(#fg)"/>
<rect x="803.0" y="345" width="13" height="13" fill="#000000"/>
<rect x="817.0" y="345" width="13" height="13" fill="#414042"/>
<rect x="831.0" y="345" width="13" height="13" fill="#58595b"/>
<rect x="845.0" y="345" width="13" height="13" fill="#6d6e71"/>
<rect x="859.0" y="345" width="13" height="13" fill="#808285"/>
<rect x="873.0" y="345" width="13" height="13" fill="#939598"/>
<rect x="887.0" y="345" width="13" height="13" fill="#a7a9ac"/>
<rect x="901.0" y="345" width="13" height="13" fill="#bcbec0"/>
<rect x="915.0" y="345" width="13" height="13" fill="#d1d3d4"/>
<rect x="929.0" y="345" width="13" height="13" fill="#e6e7e8"/>
<rect x="943.0" y="345" width="13" height="13" fill="#f1f2f2"/>
<path d="M789.5,362.0 h5 l1.2,1.6 h5.3 v8.4 h-11.5 Z" fill="url(#fg)"/>
<rect x="803.0" y="360" width="13" height="13" fill="#ed1c24"/>
<rect x="817.0" y="360" width="13" height="13" fill="#f26522"/>
<rect x="831.0" y="360" width="13" height="13" fill="#ffde17"/>
<rect x="845.0" y="360" width="13" height="13" fill="#00a651"/>
<rect x="859.0" y="360" width="13" height="13" fill="#21409a"/>
<rect x="873.0" y="360" width="13" height="13" fill="#7f3f98"/>
</svg>
<!-- LAYERS PANEL -->
<div class="a" style="left:783px;top:395px;width:240px;height:17px;background:#1c1c1c;border-top:1px solid #2a2a2a"></div>
<div class="a" style="left:783px;top:395px;width:43px;height:17px;background:#393939;border-top:1px solid #424242"></div>
<div class="a" style="left:826px;top:395px;width:1px;height:17px;background:#1a1a1a"></div>
<div class="a" style="left:783px;top:412px;width:240px;height:179px;background:#393939"></div>
<div class="t" style="left:789.78px;top:399px;font-size:11px;font-weight:bold;color:#dcdcdc;transform:scaleX(0.821);transform-origin:0 0">Layers</div>
<div class="a" style="left:788px;top:418px;width:230px;height:154px;background:#333;border:1px solid #1e1e1e"></div>
<div class="a" style="left:789px;top:419px;width:228px;height:20px;background:#4d5666"></div>
<div class="a" style="left:809px;top:419px;width:1px;height:20px;background:#333a44"></div>
<div class="a" style="left:830px;top:419px;width:1px;height:20px;background:#333a44"></div>
<div class="a" style="left:832px;top:420px;width:4px;height:18px;background:#4a7ae6"></div>
<div class="a" style="left:837px;top:419px;width:1px;height:20px;background:#333a44"></div>
<div class="a" style="left:982px;top:419px;width:1px;height:20px;background:#333a44"></div>
<div class="a" style="left:858px;top:420px;width:18px;height:18px;background:#fff;border:1px solid #000"></div>
<div class="t" style="left:880.50px;top:424px;font-size:11px;color:#e0e0e0;transform:scaleX(0.903);transform-origin:0 0">Layer 1</div>
<div class="a" style="left:788px;top:439px;width:230px;height:1px;background:#262626"></div>
<div class="t" style="left:787.53px;top:577px;font-size:11px;color:#e0e0e0;transform:scaleX(0.872);transform-origin:0 0">1 Layer</div>
<div class="a" style="left:783px;top:592px;width:240px;height:8px;background:#393939"></div>


<svg class="a" style="left:0;top:0" width="1024" height="600" viewBox="0 0 1024 600">
<defs><linearGradient id="dg" x1="0" y1="0" x2="0" y2="1"><stop offset="0" stop-color="#d8d8d8"/><stop offset="1" stop-color="#9a9a9a"/></linearGradient></defs>
<!-- dock >> -->
<path d="M1011.5,67 L1015,69.5 L1011.5,72 Z M1015,67 L1018.5,69.5 L1015,72 Z" fill="#b8b8b8"/>
<!-- panel menu icons -->
<g fill="#cfcfcf">
<path d="M1005,82.5 L1010,82.5 L1007.5,86 Z"/><rect x="1011" y="81" width="8" height="1"/><rect x="1011" y="83" width="8" height="1"/><rect x="1011" y="85" width="8" height="1"/><rect x="1011" y="87" width="8" height="1"/>
<path d="M1005,269.5 L1010,269.5 L1007.5,273 Z"/><rect x="1011" y="268" width="8" height="1"/><rect x="1011" y="270" width="8" height="1"/><rect x="1011" y="272" width="8" height="1"/><rect x="1011" y="274" width="8" height="1"/>
<path d="M1005,401.5 L1010,401.5 L1007.5,405 Z"/><rect x="1011" y="400" width="8" height="1"/><rect x="1011" y="402" width="8" height="1"/><rect x="1011" y="404" width="8" height="1"/><rect x="1011" y="406" width="8" height="1"/>
</g>
<!-- up/down arrows in Color tab -->
<path d="M788,83.5 L790.5,80 L793,83.5 M788,85 L790.5,88.5 L793,85" fill="none" stroke="#d0d0d0" stroke-width="1.2"/>
<!-- fill/stroke mini -->
<rect x="791.5" y="103.5" width="8" height="8" fill="#2a2a2a" stroke="#b0b0b0" stroke-width="1"/>
<rect x="788.5" y="100.5" width="7" height="7" fill="#d8d8d8" stroke="#333" stroke-width="0.8"/>
<!-- swap -->
<path d="M809,102.5 C813,102.5 815.5,104 815.5,108" fill="none" stroke="#c8c8c8" stroke-width="1"/>
<path d="M807.6,102.5 L810.2,100.4 L810.2,104.6 Z M815.5,110.4 L813.4,107.8 L817.6,107.8 Z" fill="#c8c8c8"/>
<!-- big fill/stroke -->
<rect x="789.3" y="118.3" width="17.6" height="17.6" fill="#8cc63f" stroke="#f0f0f0" stroke-width="1.6"/>
<rect x="799.3" y="128.3" width="17.6" height="17.6" fill="#25301a" stroke="#f0f0f0" stroke-width="1.6"/>
<rect x="803.8" y="132.6" width="8.8" height="8.8" fill="#393939" stroke="#f0f0f0" stroke-width="1.4"/>
<!-- cube -->
<path d="M799.5,162.5 L805,165.2 L805,171 L799.5,173.8 L794,171 L794,165.2 Z" fill="#8a8a8a" stroke="#b0b0b0" stroke-width="0.8"/>
<path d="M794,165.2 L799.5,168 L805,165.2 M799.5,168 V173.8" fill="none" stroke="#555" stroke-width="0.8"/>
<!-- small swatch -->
<rect x="813" y="160.8" width="13" height="13.2" fill="#393a1c" stroke="#f0f0f0" stroke-width="1.3"/>
<!-- slider thumbs -->
<g fill="#c4c4c4"><path d="M874,120.5 L874,117 L877.6,113.8 L881.2,117 L881.2,120.5 Z"/><path d="M920,154 L920,150.5 L923.6,147.2 L927.2,150.5 L927.2,154 Z"/><path d="M870,186.5 L870,183 L873.6,179.8 L877.2,183 L877.2,186.5 Z"/></g>
<!-- degree -->
<circle cx="1000.2" cy="109" r="1.8" fill="none" stroke="#d8d8d8" stroke-width="1.1"/>
<!-- none/black/white -->
<rect x="789" y="208" width="38.5" height="12.5" fill="#fff" stroke="#1a1a1a" stroke-width="1"/>
<rect x="801.5" y="208.5" width="12.5" height="12" fill="#0a0a0a"/>
<path d="M789.8,219.6 L800.8,208.8" stroke="#ed1c24" stroke-width="1.6"/>
<!-- resize grippers -->
<g fill="#909090">
<circle cx="1019" cy="249" r="0.6"/><circle cx="1017" cy="251" r="0.6"/><circle cx="1019" cy="251" r="0.6"/><circle cx="1015" cy="253" r="0.6"/><circle cx="1017" cy="253" r="0.6"/><circle cx="1019" cy="253" r="0.6"/><circle cx="1013" cy="255" r="0.6"/><circle cx="1015" cy="255" r="0.6"/><circle cx="1017" cy="255" r="0.6"/><circle cx="1019" cy="255" r="0.6"/>
<circle cx="1019" cy="381" r="0.6"/><circle cx="1017" cy="383" r="0.6"/><circle cx="1019" cy="383" r="0.6"/><circle cx="1015" cy="385" r="0.6"/><circle cx="1017" cy="385" r="0.6"/><circle cx="1019" cy="385" r="0.6"/><circle cx="1013" cy="387" r="0.6"/><circle cx="1015" cy="387" r="0.6"/><circle cx="1017" cy="387" r="0.6"/><circle cx="1019" cy="387" r="0.6"/>
<circle cx="1020" cy="581" r="0.6"/><circle cx="1018" cy="583" r="0.6"/><circle cx="1020" cy="583" r="0.6"/><circle cx="1016" cy="585" r="0.6"/><circle cx="1018" cy="585" r="0.6"/><circle cx="1020" cy="585" r="0.6"/><circle cx="1014" cy="587" r="0.6"/><circle cx="1016" cy="587" r="0.6"/><circle cx="1018" cy="587" r="0.6"/><circle cx="1020" cy="587" r="0.6"/>
</g>
<!-- swatch scrollbar -->
<rect x="1005.5" y="286.5" width="12" height="85" fill="#222"/>
<rect x="1006" y="303" width="11" height="49" fill="#858585"/>
<path d="M1007.8,296.6 L1011.4,292 L1015,296.6 Z M1007.8,363.4 L1011.4,368 L1015,363.4 Z" fill="#e0e0e0"/>
<!-- swatches bottom icons -->
<g fill="url(#dg)">
<rect x="792" y="377.6" width="2.2" height="9.4"/><rect x="795.2" y="376.4" width="2.6" height="10.6"/><path d="M797.8,377.4 L799.4,376.8 L802.6,386.6 L800.8,387.2 Z"/>
</g>
<path d="M804,384.7 L809.2,384.7 L806.6,388.2 Z" fill="#c8c8c8"/>
<rect x="877.8" y="377" width="10.5" height="10" fill="#bdbdbd"/>
<g fill="#1e1e1e"><rect x="881.4" y="378.2" width="2" height="2"/><rect x="885.2" y="381.6" width="2" height="2"/><rect x="879" y="385" width="2" height="1.6"/><rect x="882.4" y="385" width="2" height="1.6"/></g>
<g fill="#8a8a8a"><rect x="879" y="378.2" width="2" height="2"/><rect x="884.6" y="378.2" width="2" height="2"/><rect x="879" y="381.6" width="2" height="2"/><rect x="882.2" y="381.6" width="2" height="2"/><rect x="885.6" y="385" width="2" height="1.6"/></g>
<path d="M889,384.7 L894.2,384.7 L891.6,388.2 Z" fill="#c8c8c8"/>
<rect x="906.5" y="377" width="9" height="10" fill="none" stroke="#555" stroke-width="1"/>
<path d="M908.5,379.5 h1 M908.5,382 h1 M908.5,384.5 h1 M910.5,379.5 h3 M910.5,382 h3 M910.5,384.5 h3" stroke="#555"/>
<path d="M931.5,378 h4.5 l1,1.5 h7.5 v8 h-13 Z" fill="url(#dg)"/>
<path d="M960,377 h9 v10.5 h-7 v-3 h-2 Z" fill="url(#dg)"/><path d="M959,384 L962,387.5" stroke="#c8c8c8" stroke-width="1"/>
<path d="M985,379 h9 M988,377.5 h3 M986,380 v7.5 h7 v-7.5 M988.3,381 v5.5 M990.6,381 v5.5" fill="none" stroke="#5a5a5a" stroke-width="1"/>
<!-- layers row -->
<path d="M792,428 C794.5,422.5 801.5,422.5 804,428 C801.5,433 794.5,433 792,428 Z" fill="#c4c4c4"/>
<circle cx="798" cy="427.6" r="2.8" fill="#3a3a3a"/><circle cx="797" cy="426.6" r="0.9" fill="#e0e0e0"/>
<path d="M842,424.5 L848,428.5 L842,432.5 Z" fill="#d0d0d0"/>
<path d="M859.8,430.5 C859.8,426 863,423 867,423 C871,423 874.2,426 874.2,430.5 C874.2,434.2 872,434.8 867,434.8 C862,434.8 859.8,434.2 859.8,430.5 Z" fill="#8cc63f" stroke="#263019" stroke-width="1"/>
<rect x="866.8" y="424.5" width="0.9" height="2.8" fill="#263019"/>
<circle cx="992.5" cy="428.8" r="4.2" fill="none" stroke="#bdbdbd" stroke-width="1.2"/>
<path d="M1012,419 H1017 V424 Z" fill="#cfcfcf"/>
<!-- layers bottom icons -->
<circle cx="887.2" cy="579" r="3.6" fill="none" stroke="#5a5a5a" stroke-width="1.1"/>
<path d="M884.6,581.6 L880.6,585.8" stroke="#5a5a5a" stroke-width="1.2"/>
<rect x="906.5" y="576.5" width="7" height="6.5" fill="none" stroke="#d0d0d0" stroke-width="1.1"/>
<rect x="909.5" y="579.5" width="7.5" height="7.5" fill="#777" fill-opacity="0.7" stroke="#6a6a6a" stroke-width="0.8"/>
<path d="M931.5,576.5 V580 H936 M934,578 L936.2,580 L934,582" fill="none" stroke="#d0d0d0" stroke-width="1"/>
<path d="M937,577 h8 v10 h-6 v-3 h-2 Z" fill="url(#dg)"/><path d="M936,583 L939,587" stroke="#c8c8c8"/>
<path d="M959,577 h10 v10.5 h-7.5 v-3.5 h-2.5 Z" fill="url(#dg)"/><path d="M958.5,584 L961.5,587.5" stroke="#c8c8c8"/>
<path d="M984.5,578.5 h10 M987.5,577 h4 M985.5,579.5 v7.5 h8 v-7.5 M988,580.5 v5.5 M990.5,580.5 v5.5" fill="none" stroke="#555" stroke-width="1"/>
<!-- bottom gripper -->
<path d="M893.5,594v3.5M895.5,594v3.5M897.5,594v3.5M899.5,594v3.5M901.5,594v3.5M903.5,594v3.5M905.5,594v3.5M907.5,594v3.5M909.5,594v3.5M911.5,594v3.5" stroke="#111" stroke-width="1"/>
</svg>

</body></html>
